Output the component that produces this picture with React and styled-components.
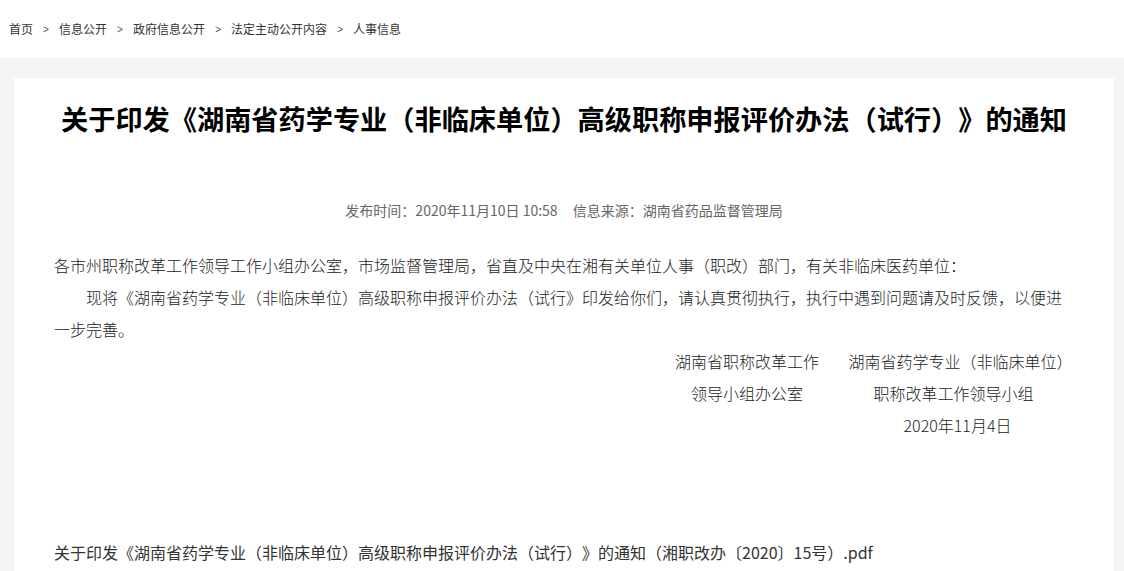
import React from "react";
import styled, { createGlobalStyle } from "styled-components";

const GlobalStyle = createGlobalStyle`
  html, body {
    margin: 0;
    padding: 0;
    background: #fff;
  }
  body {
    font-family: "Noto Sans CJK SC", "Noto Sans", sans-serif;
    color: #333;
    text-spacing-trim: space-all;
  }
`;

const Crumbs = styled.nav`
  display: flex;
  align-items: center;
  height: 58px;
  padding-left: 9px;
  background: #fff;
  font-size: 12px;
  color: #333;
`;

const Crumb = styled.a`
  color: #333;
  text-decoration: none;
  line-height: 16px;
`;

const Sep = styled.span`
  width: 26px;
  text-align: center;
  color: #555;
  font-size: 10px;
  font-family: "Liberation Sans", sans-serif;
`;

const Stage = styled.main`
  background: #f4f4f4;
  padding: 20px 10px 0 14px;
`;

const Card = styled.article`
  background: #fff;
  padding: 20px 40px 60px 40px;
`;

const Title = styled.h1`
  margin: 0;
  font-size: 27.2px;
  line-height: 40px;
  font-weight: 700;
  color: #000;
  text-align: center;
  white-space: nowrap;
`;

const Meta = styled.div`
  margin-top: 62px;
  font-size: 14px;
  line-height: 20px;
  color: #666;
  text-align: center;
`;

const Source = styled.span`
  margin-left: 15px;
`;

const Body = styled.div`
  margin-top: 29px;
  font-size: 16px;
  font-weight: 300;
  line-height: 32px;
  color: #222;
`;

const Para = styled.p`
  margin: 0;
  text-indent: ${(p) => (p.$indent ? "2em" : "0")};
`;

const Signs = styled.div`
  display: flex;
  justify-content: flex-end;
  gap: 27px;
`;

const SignCol = styled.div`
  display: flex;
  flex-direction: column;
  width: ${(p) => p.$w}px;
`;

const SignLine = styled.div`
  text-align: center;
  white-space: nowrap;
  padding-right: ${(p) => p.$shift || 0}px;
`;

const Attach = styled.a`
  display: block;
  margin-top: 95px;
  font-size: 16px;
  line-height: 32px;
  color: #333;
  text-decoration: none;
`;

const trail = ["首页", "信息公开", "政府信息公开", "法定主动公开内容", "人事信息"];

export default function App() {
  return (
    <>
      <GlobalStyle />
      <Crumbs>
        {trail.map((t, i) => (
          <React.Fragment key={t}>
            {i > 0 && <Sep>&gt;</Sep>}
            <Crumb href="#">{t}</Crumb>
          </React.Fragment>
        ))}
      </Crumbs>
      <Stage>
        <Card>
          <Title>关于印发《湖南省药学专业（非临床单位）高级职称申报评价办法（试行）》的通知</Title>
          <Meta>
            发布时间：2020年11月10日 10:58
            <Source>信息来源：湖南省药品监督管理局</Source>
          </Meta>
          <Body>
            <Para>各市州职称改革工作领导工作小组办公室，市场监督管理局，省直及中央在湘有关单位人事（职改）部门，有关非临床医药单位：</Para>
            <Para $indent>现将《湖南省药学专业（非临床单位）高级职称申报评价办法（试行》印发给你们，请认真贯彻执行，执行中遇到问题请及时反馈，以便进一步完善。</Para>
            <Signs>
              <SignCol $w={146}>
                <SignLine>湖南省职称改革工作</SignLine>
                <SignLine>领导小组办公室</SignLine>
              </SignCol>
              <SignCol $w={227}>
                <SignLine>湖南省药学专业（非临床单位）</SignLine>
                <SignLine $shift={14}>职称改革工作领导小组</SignLine>
                <SignLine $shift={6}>2020年11月4日</SignLine>
              </SignCol>
            </Signs>
          </Body>
          <Attach href="#">关于印发《湖南省药学专业（非临床单位）高级职称申报评价办法（试行）》的通知（湘职改办〔2020〕15号）.pdf</Attach>
        </Card>
      </Stage>
    </>
  );
}
